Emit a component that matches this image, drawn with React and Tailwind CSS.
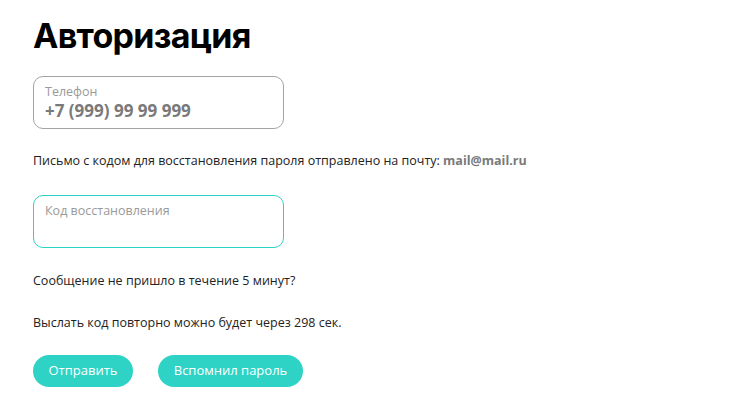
import React, { useState } from 'react';

const App = () => {
  const [code, setCode] = useState('');

  return (
    <div className="min-h-screen bg-white px-[33px] pt-[14px] font-['Open_Sans',sans-serif] text-[#222]">
      <h1 className="font-['Inter',sans-serif] text-[34px] font-bold leading-[44px] tracking-[-0.7px] text-black">
        Авторизация
      </h1>

      <div className="mt-[18px] flex h-[53px] w-[251px] flex-col justify-center rounded-[10px] border border-[#a3a3a3] px-[11px]">
        <span className="text-[12.5px] leading-[16px] text-[#9a9a9a]">Телефон</span>
        <span className="text-[17px] font-bold leading-[22px] text-[#7a7a7a]">+7 (999) 99 99 999</span>
      </div>

      <p className="mt-[23px] text-[12.5px] leading-[18px]">
        Письмо с кодом для восстановления пароля отправлено на почту:{' '}
        <span className="font-bold text-[#7a7a7a]">mail@mail.ru</span>
      </p>

      <div className="mt-[25px] h-[53px] w-[251px] rounded-[10px] border border-[#2ed3c6]">
        <input
          value={code}
          onChange={(e) => setCode(e.target.value)}
          placeholder="Код восстановления"
          className="w-full bg-transparent px-[11px] pt-[7px] text-[12.5px] leading-[16px] outline-none placeholder:text-[#9a9a9a]"
        />
      </div>

      <p className="mt-[24px] text-[12.5px] leading-[18px]">Сообщение не пришло в течение 5 минут?</p>
      <p className="mt-[24px] text-[12.5px] leading-[18px]">Выслать код повторно можно будет через 298 сек.</p>

      <div className="mt-[23px] flex gap-[25px]">
        <button className="h-[32px] w-[100px] rounded-full bg-[#2ed3c6] text-[13px] text-white">Отправить</button>
        <button className="h-[32px] w-[145px] rounded-full bg-[#2ed3c6] text-[13px] text-white">Вспомнил пароль</button>
      </div>
    </div>
  );
};

export default App;
